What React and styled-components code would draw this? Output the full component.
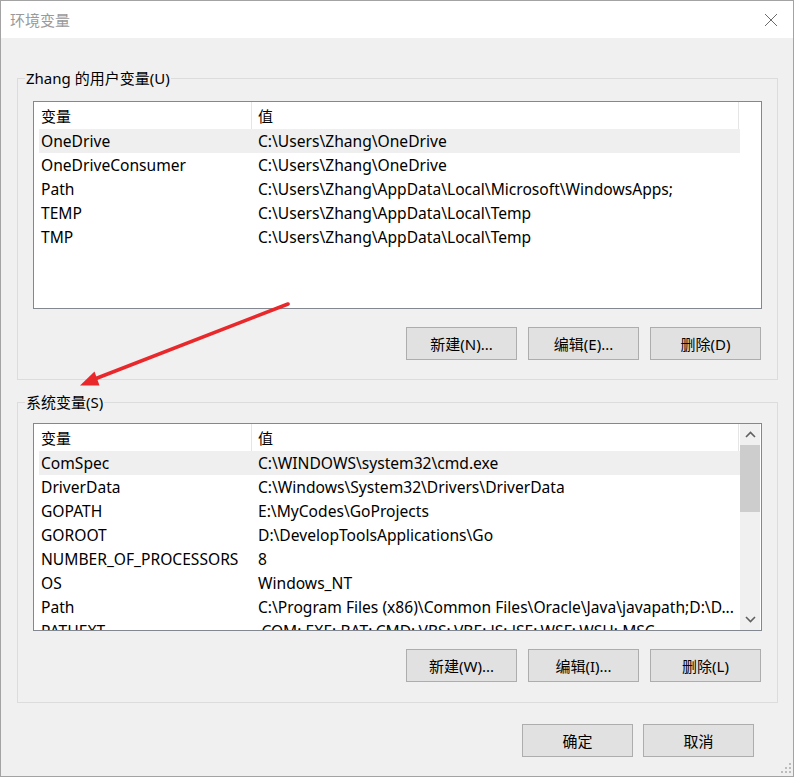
import React from 'react';
import styled, { createGlobalStyle } from 'styled-components';

const Global = createGlobalStyle`
  html, body { margin: 0; padding: 0; background: #f0f0f0; }
  body {
    font-family: "Noto Sans", "Noto Sans CJK SC", sans-serif;
    font-size: 15px;
    color: #000;
  }
  * { box-sizing: border-box; }
`;

const Window = styled.div`
  position: relative;
  width: 794px;
  height: 777px;
  border: 1px solid #a3a3a3;
  background: #f0f0f0;
  display: flex;
  flex-direction: column;
  overflow: hidden;
`;

const TitleBar = styled.div`
  height: 37px;
  flex: none;
  background: #fff;
  display: flex;
  align-items: center;
  justify-content: space-between;
  padding: 0 15px 0 9px;
`;

const Title = styled.span`
  font-family: "Noto Sans CJK SC", sans-serif;
  font-size: 15px;
  color: #9a9a9a;
  line-height: 20px;
`;

const CloseBtn = styled.div`
  width: 14px;
  height: 14px;
  display: flex;
  align-items: center;
  justify-content: center;
`;

const Body = styled.div`
  flex: 1;
  padding: 30px 15px 0 16px;
  display: flex;
  flex-direction: column;
`;

const Group = styled.fieldset`
  margin: 0 0 ${p => p.$mb || 0}px;
  padding: 0 15px ${p => p.$pb}px 15px;
  border: 1px solid #dcdcdc;
  min-width: 0;
`;

const Legend = styled.legend`
  margin-left: -8px;
  padding: 0 1px;
  line-height: 20px;
  font-size: 15px;
  color: #000;
`;

const GroupInner = styled.div`
  padding-top: ${p => p.$pt}px;
  display: flex;
  flex-direction: column;
`;

const List = styled.div`
  height: 208px;
  border: 1px solid #828790;
  background: #fff;
  display: flex;
  overflow: hidden;
`;

const ListContent = styled.div`
  width: 706px;
  flex: none;
  padding-left: 5px;
  overflow: hidden;
  display: flex;
  flex-direction: column;
`;

const Header = styled.div`
  height: 27px;
  flex: none;
  display: grid;
  grid-template-columns: 212px 1fr;
  align-items: stretch;
  margin-right: 1px;
  border-right: 1px solid #e5e5e5;
`;

const HeadCell = styled.div`
  display: flex;
  align-items: center;
  padding-left: ${p => (p.$value ? 6 : 2)}px;
  border-left: ${p => (p.$value ? '1px solid #e5e5e5' : 'none')};
  white-space: nowrap;
`;

const Row = styled.div`
  height: 24px;
  flex: none;
  display: grid;
  grid-template-columns: 212px 1fr;
  background: ${p => (p.$selected ? '#efefef' : 'transparent')};
`;

const Cell = styled.div`
  line-height: 24px;
  font-size: 15.6px;
  padding-left: ${p => (p.$value ? 7 : 2)}px;
  white-space: nowrap;
  overflow: hidden;
`;

const ScrollArea = styled.div`
  flex: 1;
  background: ${p => (p.$show ? '#f0f0f0' : '#fff')};
  display: flex;
  flex-direction: column;
  margin-right: 1px;
`;

const ScrollArrow = styled.div`
  height: 21px;
  flex: none;
  display: flex;
  align-items: center;
  justify-content: center;
`;

const ScrollThumb = styled.div`
  height: 67px;
  flex: none;
  background: #cdcdcd;
`;

const ScrollSpacer = styled.div`
  flex: 1;
`;

const ButtonRow = styled.div`
  display: flex;
  justify-content: flex-end;
  gap: ${p => p.$gap}px;
  margin-top: ${p => p.$mt}px;
  padding-right: ${p => p.$pr}px;
`;

const Button = styled.button`
  width: 111px;
  height: 33px;
  margin: 0;
  padding: 0 0 1px;
  background: #e1e1e1;
  border: 1px solid #adadad;
  border-radius: 0;
  font-family: "Noto Sans", "Noto Sans CJK SC", sans-serif;
  font-size: 15px;
  color: #000;
`;

const Overlay = styled.svg`
  position: absolute;
  left: -1px;
  top: -1px;
  pointer-events: none;
`;

const Grip = styled.svg`
  position: absolute;
  right: 1px;
  bottom: 2px;
`;

const userVars = [
  ['OneDrive', 'C:\\Users\\Zhang\\OneDrive'],
  ['OneDriveConsumer', 'C:\\Users\\Zhang\\OneDrive'],
  ['Path', 'C:\\Users\\Zhang\\AppData\\Local\\Microsoft\\WindowsApps;'],
  ['TEMP', 'C:\\Users\\Zhang\\AppData\\Local\\Temp'],
  ['TMP', 'C:\\Users\\Zhang\\AppData\\Local\\Temp'],
];

const sysVars = [
  ['ComSpec', 'C:\\WINDOWS\\system32\\cmd.exe'],
  ['DriverData', 'C:\\Windows\\System32\\Drivers\\DriverData'],
  ['GOPATH', 'E:\\MyCodes\\GoProjects'],
  ['GOROOT', 'D:\\DevelopToolsApplications\\Go'],
  ['NUMBER_OF_PROCESSORS', '8'],
  ['OS', 'Windows_NT'],
  ['Path', 'C:\\Program Files (x86)\\Common Files\\Oracle\\Java\\javapath;D:\\D...'],
  ['PATHEXT', '.COM;.EXE;.BAT;.CMD;.VBS;.VBE;.JS;.JSE;.WSF;.WSH;.MSC'],
];

const Chevron = ({ up }) => (
  <svg width="11" height="7" viewBox="0 0 11 7">
    <path
      d={up ? 'M1 6 L5.5 1.5 L10 6' : 'M1 1 L5.5 5.5 L10 1'}
      fill="none"
      stroke="#606060"
      strokeWidth="1.6"
    />
  </svg>
);

const VarList = ({ rows, scroll }) => (
  <List>
    <ListContent>
      <Header>
        <HeadCell>变量</HeadCell>
        <HeadCell $value>值</HeadCell>
      </Header>
      {rows.map(([k, v], i) => (
        <Row key={k + i} $selected={i === 0}>
          <Cell>{k}</Cell>
          <Cell $value>{v}</Cell>
        </Row>
      ))}
    </ListContent>
    <ScrollArea $show={scroll}>
      {scroll && (
        <>
          <ScrollArrow>
            <Chevron up />
          </ScrollArrow>
          <ScrollThumb />
          <ScrollSpacer />
          <ScrollArrow>
            <Chevron />
          </ScrollArrow>
        </>
      )}
    </ScrollArea>
  </List>
);

export default function App() {
  return (
    <>
      <Global />
      <Window>
        <TitleBar>
          <Title>环境变量</Title>
          <CloseBtn>
            <svg width="14" height="14" viewBox="0 0 14 14">
              <path d="M1 1 L13 13 M13 1 L1 13" stroke="#6b6b6b" strokeWidth="1" fill="none" />
            </svg>
          </CloseBtn>
        </TitleBar>
        <Body>
          <Group $pb={19} $mb={12}>
            <Legend>Zhang 的用户变量(U)</Legend>
            <GroupInner $pt={13}>
              <VarList rows={userVars} />
              <ButtonRow $gap={11} $mt={18} $pr={1}>
                <Button>新建(N)...</Button>
                <Button>编辑(E)...</Button>
                <Button>删除(D)</Button>
              </ButtonRow>
            </GroupInner>
          </Group>
          <Group $pb={20}>
            <Legend>系统变量(S)</Legend>
            <GroupInner $pt={11}>
              <VarList rows={sysVars} scroll />
              <ButtonRow $gap={11} $mt={18} $pr={1}>
                <Button>新建(W)...</Button>
                <Button>编辑(I)...</Button>
                <Button>删除(L)</Button>
              </ButtonRow>
            </GroupInner>
          </Group>
          <ButtonRow $gap={10} $mt={21} $pr={24}>
            <Button>确定</Button>
            <Button>取消</Button>
          </ButtonRow>
        </Body>
        <Overlay width="794" height="777" viewBox="0 0 794 777">
          <line x1="288" y1="304" x2="96" y2="378.5" stroke="#e8282b" strokeWidth="3.6" strokeLinecap="round" />
          <polygon points="80,385.5 94.5,371.5 99.5,385.5" fill="#e8282b" />
        </Overlay>
        <Grip width="12" height="12" viewBox="0 0 12 12">
          <g fill="#bcbcbc">
            <rect x="9" y="1" width="2" height="2" />
            <rect x="5" y="5" width="2" height="2" />
            <rect x="9" y="5" width="2" height="2" />
            <rect x="1" y="9" width="2" height="2" />
            <rect x="5" y="9" width="2" height="2" />
            <rect x="9" y="9" width="2" height="2" />
          </g>
        </Grip>
      </Window>
    </>
  );
}
